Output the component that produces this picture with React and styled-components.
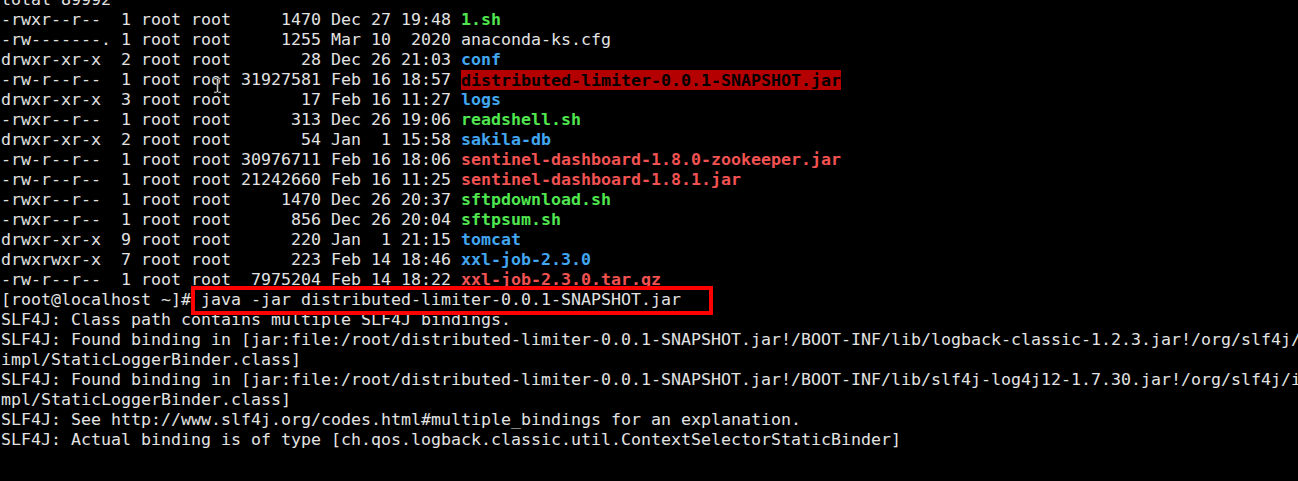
import React from "react";
import styled, { createGlobalStyle } from "styled-components";

const Global = createGlobalStyle`
  html, body { margin: 0; padding: 0; background: #000; }
  body { overflow: hidden; width: 1298px; height: 481px; }
`;

const Screen = styled.div`
  position: relative;
  margin-top: -10px;
  padding-left: 1px;
  font-family: "DejaVu Sans Mono", "Liberation Mono", monospace;
  font-size: 16.61px;
  line-height: 20px;
  color: #e2e2e2;
  background: #000;
  white-space: pre;
`;

const Line = styled.div`
  height: 20px;
`;

const Name = styled.span`
  font-weight: ${(p) => (p.$kind ? "bold" : "normal")};
  color: ${(p) =>
    p.$kind === "exec"
      ? "#4fe64f"
      : p.$kind === "dir"
      ? "#42a6f0"
      : p.$kind === "archive"
      ? "#f25252"
      : p.$kind === "alert"
      ? "#000"
      : "inherit"};
  background: ${(p) => (p.$kind === "alert" ? "#b40000" : "transparent")};
  padding: ${(p) => (p.$kind === "alert" ? "0.5px 0" : "0")};
`;

const Marked = styled.span`
  position: relative;
  &::after {
    content: "";
    position: absolute;
    left: 0;
    right: -32px;
    top: -4px;
    bottom: -6px;
    border: 4px solid #ff0000;
    box-sizing: border-box;
  }
`;

const Pointer = styled.svg`
  position: absolute;
  left: 213px;
  top: 87px;
  width: 9px;
  height: 17px;
  pointer-events: none;
`;

const rows = [
  ["-rwxr--r--  1 root root     1470 Dec 27 19:48 ", "1.sh", "exec"],
  ["-rw-------. 1 root root     1255 Mar 10  2020 ", "anaconda-ks.cfg", null],
  ["drwxr-xr-x  2 root root       28 Dec 26 21:03 ", "conf", "dir"],
  ["-rw-r--r--  1 root root 31927581 Feb 16 18:57 ", "distributed-limiter-0.0.1-SNAPSHOT.jar", "alert"],
  ["drwxr-xr-x  3 root root       17 Feb 16 11:27 ", "logs", "dir"],
  ["-rwxr--r--  1 root root      313 Dec 26 19:06 ", "readshell.sh", "exec"],
  ["drwxr-xr-x  2 root root       54 Jan  1 15:58 ", "sakila-db", "dir"],
  ["-rw-r--r--  1 root root 30976711 Feb 16 18:06 ", "sentinel-dashboard-1.8.0-zookeeper.jar", "archive"],
  ["-rw-r--r--  1 root root 21242660 Feb 16 11:25 ", "sentinel-dashboard-1.8.1.jar", "archive"],
  ["-rwxr--r--  1 root root     1470 Dec 26 20:37 ", "sftpdownload.sh", "exec"],
  ["-rwxr--r--  1 root root      856 Dec 26 20:04 ", "sftpsum.sh", "exec"],
  ["drwxr-xr-x  9 root root      220 Jan  1 21:15 ", "tomcat", "dir"],
  ["drwxrwxr-x  7 root root      223 Feb 14 18:46 ", "xxl-job-2.3.0", "dir"],
  ["-rw-r--r--  1 root root  7975204 Feb 14 18:22 ", "xxl-job-2.3.0.tar.gz", "archive"],
];

const output = [
  "SLF4J: Class path contains multiple SLF4J bindings.",
  "SLF4J: Found binding in [jar:file:/root/distributed-limiter-0.0.1-SNAPSHOT.jar!/BOOT-INF/lib/logback-classic-1.2.3.jar!/org/slf4j/",
  "impl/StaticLoggerBinder.class]",
  "SLF4J: Found binding in [jar:file:/root/distributed-limiter-0.0.1-SNAPSHOT.jar!/BOOT-INF/lib/slf4j-log4j12-1.7.30.jar!/org/slf4j/i",
  "mpl/StaticLoggerBinder.class]",
  "SLF4J: See http://www.slf4j.org/codes.html#multiple_bindings for an explanation.",
  "SLF4J: Actual binding is of type [ch.qos.logback.classic.util.ContextSelectorStaticBinder]",
];

export default function App() {
  return (
    <>
      <Global />
      <Screen>
        <Line>total 89992</Line>
        {rows.map(([meta, name, kind]) => (
          <Line key={name}>
            {meta}
            <Name $kind={kind}>{name}</Name>
          </Line>
        ))}
        <Line>
          {"[root@localhost ~]#"}
          <Marked>{" java -jar distributed-limiter-0.0.1-SNAPSHOT.jar"}</Marked>
        </Line>
        {output.map((t, i) => (
          <Line key={i}>{t}</Line>
        ))}
        <Pointer viewBox="0 0 9 17">
          <path
            d="M1 1 H3.5 L4.5 2 L5.5 1 H8 V2.5 H5.3 V14.5 H8 V16 H5.5 L4.5 15 L3.5 16 H1 V14.5 H3.7 V2.5 H1 Z"
            fill="#f4f4f4"
            stroke="#222"
            strokeWidth="0.6"
          />
        </Pointer>
      </Screen>
    </>
  );
}
